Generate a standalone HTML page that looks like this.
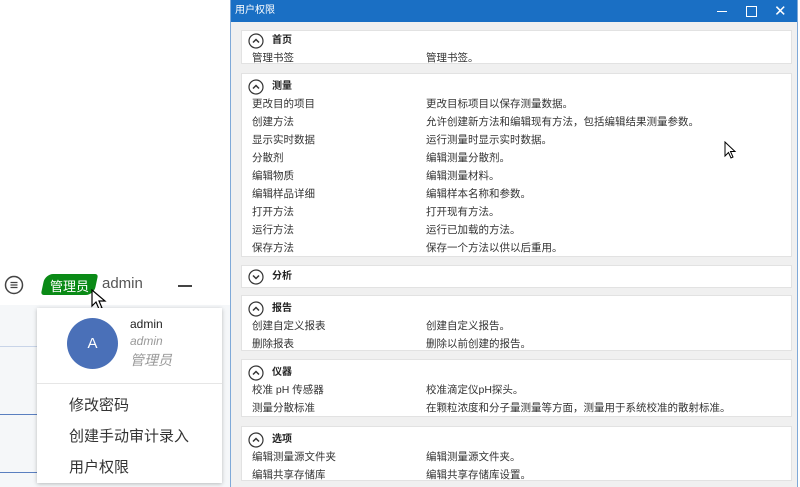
<!DOCTYPE html><html><head><meta charset="utf-8"><style>
*{margin:0;padding:0;box-sizing:border-box}
body{width:800px;height:487px;overflow:hidden;background:#fff;position:relative;font-family:"Liberation Sans","Noto Sans CJK SC",sans-serif;color:#222}
.abs{position:absolute}
.win{left:230px;top:0;width:568px;height:487px;background:#f0f0f0;border-left:1px solid #7fa9d8;border-right:1px solid #7fa9d8}
.tb{left:0;top:0;width:100%;height:22px;background:#1a6fc4;color:#fff;font-size:10px;line-height:22px;padding-left:4px}
.sec{position:absolute;left:10px;width:551px;background:#fff;border:1px solid #e2e2e2;padding-top:4px}
.hd{height:17px;position:relative;font-size:10px;font-weight:bold;line-height:17px;padding-left:30px}
.hd svg{position:absolute;left:6px;top:1px}
.row{height:18px;font-size:10.5px;line-height:18px;position:relative;padding-left:10px;color:#333}
.row span{position:absolute;left:184px}
</style></head><body>
<div class="abs" style="left:0;top:305px;width:230px;height:182px;background:#f5f7f9"></div>
<div class="abs" style="left:0;top:346px;width:40px;height:1px;background:#c8d4e8"></div>
<div class="abs" style="left:0;top:414px;width:40px;height:1px;background:#5a7fc0"></div>
<div class="abs" style="left:0;top:472px;width:40px;height:1px;background:#5a7fc0"></div>
<svg class="abs" style="left:4px;top:275px" width="20" height="20"><circle cx="10" cy="10" r="8.5" fill="none" stroke="#444" stroke-width="1.5"/><path d="M6.5 7.5h7M6.5 10h7M6.5 12.5h7" stroke="#444" stroke-width="1.3"/></svg>
<div class="abs" style="left:43px;top:274px;width:53px;height:21px;background:#0a8a16;border-radius:8px 3px 8px 3px;transform:skewX(-12deg)"></div>
<div class="abs" style="left:50px;top:276px;color:#fff;font-size:13px">管理员</div>
<div class="abs" style="left:102px;top:275px;color:#555;font-size:15px">admin</div>
<div class="abs" style="left:178px;top:285px;width:14px;height:2px;background:#444"></div>
<svg class="abs" style="left:91px;top:289px" width="16" height="22"><path d="M1 1 L1 17 L5 13 L8 20 L11 19 L8 12 L14 12 Z" fill="#fff" stroke="#000" stroke-width="1.2"/></svg>
<div class="abs" style="left:37px;top:308px;width:185px;height:175px;background:#fff;box-shadow:0 1px 4px rgba(0,0,0,.25)">
<div class="abs" style="left:30px;top:10px;width:51px;height:51px;border-radius:50%;background:#4a70b8;color:#fff;font-size:15px;text-align:center;line-height:51px">A</div>
<div class="abs" style="left:93px;top:9px;font-size:12px;color:#222">admin</div>
<div class="abs" style="left:93px;top:26px;font-size:12px;color:#999;font-style:italic">admin</div>
<div class="abs" style="left:93px;top:42px;font-size:14px;color:#999;font-style:italic">管理员</div>
<div class="abs" style="left:0;top:75px;width:185px;height:1px;background:#e6e6e6"></div>
<div class="abs" style="left:32px;top:86px;font-size:15px;color:#333">修改密码</div>
<div class="abs" style="left:32px;top:117px;font-size:15px;color:#333">创建手动审计录入</div>
<div class="abs" style="left:32px;top:148px;font-size:15px;color:#333">用户权限</div>
</div>
<div class="abs win">
<div class="abs tb">用户权限</div>
<div class="abs" style="left:486px;top:11px;width:10px;height:1px;background:#fff"></div>
<div class="abs" style="left:515px;top:6px;width:11px;height:11px;border:1px solid #fff"></div>
<div class="abs" style="left:543px;top:2px;color:#fff;font-size:15px">✕</div>
<div class="sec" style="top:30px;height:34px;padding-top:1px"><div class="hd"><svg width="16" height="16"><circle cx="8" cy="8" r="7" fill="none" stroke="#333" stroke-width="1.2"/><path d="M5 9.5L8 6.5L11 9.5" fill="none" stroke="#333" stroke-width="1.5"/></svg>首页</div><div class="row">管理书签<span>管理书签。</span></div></div>
<div class="sec" style="top:73px;height:184px"><div class="hd"><svg width="16" height="16"><circle cx="8" cy="8" r="7" fill="none" stroke="#333" stroke-width="1.2"/><path d="M5 9.5L8 6.5L11 9.5" fill="none" stroke="#333" stroke-width="1.5"/></svg>测量</div>
<div class="row">更改目的项目<span>更改目标项目以保存测量数据。</span></div>
<div class="row">创建方法<span>允许创建新方法和编辑现有方法，包括编辑结果测量参数。</span></div>
<div class="row">显示实时数据<span>运行测量时显示实时数据。</span></div>
<div class="row">分散剂<span>编辑测量分散剂。</span></div>
<div class="row">编辑物质<span>编辑测量材料。</span></div>
<div class="row">编辑样品详细<span>编辑样本名称和参数。</span></div>
<div class="row">打开方法<span>打开现有方法。</span></div>
<div class="row">运行方法<span>运行已加载的方法。</span></div>
<div class="row">保存方法<span>保存一个方法以供以后重用。</span></div></div>
<div class="sec" style="top:265px;height:23px;padding-top:2px"><div class="hd"><svg width="16" height="16"><circle cx="8" cy="8" r="7" fill="none" stroke="#333" stroke-width="1.2"/><path d="M5 6.5L8 9.5L11 6.5" fill="none" stroke="#333" stroke-width="1.5"/></svg>分析</div></div>
<div class="sec" style="top:295px;height:56px"><div class="hd"><svg width="16" height="16"><circle cx="8" cy="8" r="7" fill="none" stroke="#333" stroke-width="1.2"/><path d="M5 9.5L8 6.5L11 9.5" fill="none" stroke="#333" stroke-width="1.5"/></svg>报告</div>
<div class="row">创建自定义报表<span>创建自定义报告。</span></div>
<div class="row">删除报表<span>删除以前创建的报告。</span></div></div>
<div class="sec" style="top:359px;height:58px"><div class="hd"><svg width="16" height="16"><circle cx="8" cy="8" r="7" fill="none" stroke="#333" stroke-width="1.2"/><path d="M5 9.5L8 6.5L11 9.5" fill="none" stroke="#333" stroke-width="1.5"/></svg>仪器</div>
<div class="row">校准 pH 传感器<span>校准滴定仪pH探头。</span></div>
<div class="row">测量分散标准<span>在颗粒浓度和分子量测量等方面，测量用于系统校准的散射标准。</span></div></div>
<div class="sec" style="top:426px;height:55px"><div class="hd"><svg width="16" height="16"><circle cx="8" cy="8" r="7" fill="none" stroke="#333" stroke-width="1.2"/><path d="M5 9.5L8 6.5L11 9.5" fill="none" stroke="#333" stroke-width="1.5"/></svg>选项</div>
<div class="row">编辑测量源文件夹<span>编辑测量源文件夹。</span></div>
<div class="row">编辑共享存储库<span>编辑共享存储库设置。</span></div></div>
<svg class="abs" style="left:493px;top:141px" width="14" height="20"><path d="M1 1 L1 15 L4.5 11.5 L7 17 L9 16 L6.5 10.5 L11 10.5 Z" fill="#fff" stroke="#000" stroke-width="1"/></svg>
</div>
</body></html>
